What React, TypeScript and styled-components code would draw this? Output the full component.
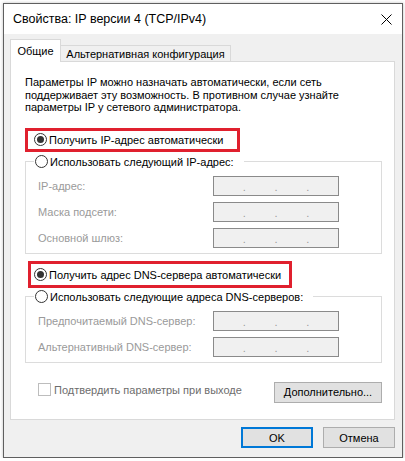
import React from 'react';
import styled, { createGlobalStyle } from 'styled-components';

const GlobalStyle = createGlobalStyle`
  html, body {
    margin: 0;
    padding: 0;
    background: #ffffff;
  }
  body {
    font-family: "Liberation Sans", Arial, sans-serif;
    font-size: 11px;
    color: #000;
  }
  * {
    box-sizing: border-box;
  }
`;

const Window = styled.div`
  margin: 3px 0 0 3px;
  width: 400px;
  height: 455px;
  border: 1px solid #5f5f5f;
  box-shadow: 0 0 3px rgba(0, 0, 0, 0.25);
  display: flex;
  flex-direction: column;
  background: #f0f0f0;
`;

const TitleBar = styled.div`
  height: 30px;
  background: #ffffff;
  display: flex;
  align-items: center;
  justify-content: space-between;
  padding: 0 10px 0 9px;
`;

const Title = styled.span`
  font-size: 12.5px;
  color: #000;
`;

const Body = styled.div`
  flex: 1;
  display: flex;
  flex-direction: column;
  padding: 6px 7px 0 6px;
`;

const Tabs = styled.div`
  display: flex;
  align-items: flex-end;
  height: 22px;
  position: relative;
  z-index: 1;
  margin-bottom: -1px;
`;

const Tab = styled.div<{ $active?: boolean }>`
  height: ${p => (p.$active ? '23px' : '17px')};
  padding: ${p => (p.$active ? '0 0 1px 0' : '0')};
  display: flex;
  align-items: center;
  justify-content: center;
  white-space: nowrap;
  background: ${p => (p.$active ? '#ffffff' : '#f0f0f0')};
  border: 1px solid #d9d9d9;
  border-bottom: ${p => (p.$active ? 'none' : '1px solid #d9d9d9')};
  border-left: ${p => (p.$active ? '1px solid #d9d9d9' : 'none')};
  width: ${p => (p.$active ? '51px' : '170px')};
`;

const Panel = styled.div`
  height: 359px;
  background: #ffffff;
  border: 1px solid #d9d9d9;
  padding: 14px 12px 0 14px;
  display: flex;
  flex-direction: column;
`;

const Intro = styled.p`
  margin: 0;
  line-height: 12.5px;
  white-space: nowrap;
`;

const Highlight = styled.div<{ $left: number; $width: number; $tall?: boolean }>`
  align-self: flex-start;
  margin-left: ${p => p.$left}px;
  width: ${p => p.$width}px;
  border: 3px solid #e0202e;
  padding: ${p => (p.$tall ? '3px' : '1px')} 0 ${p => (p.$tall ? '2px' : '1px')} ${p => 6 - p.$left}px;
`;

const RadioRow = styled.label`
  display: flex;
  align-items: center;
  gap: 2px;
  height: 16px;
  white-space: nowrap;
`;

const RadioMark = styled.span<{ $checked?: boolean }>`
  width: 13px;
  height: 13px;
  border-radius: 50%;
  border: 1px solid #333333;
  background: #ffffff;
  display: flex;
  align-items: center;
  justify-content: center;
  flex-shrink: 0;

  &::after {
    content: '';
    display: ${p => (p.$checked ? 'block' : 'none')};
    width: 7px;
    height: 7px;
    border-radius: 50%;
    background: #333333;
  }
`;

const Group = styled.fieldset`
  margin: 0;
  border: 1px solid #dcdcdc;
  padding: 6px 12px 5px 8px;
  min-width: 0;
`;

const Legend = styled.legend`
  padding: 0 10px 0 1px;
`;

const Fields = styled.div`
  display: grid;
  grid-template-columns: 175px 126px;
  row-gap: 6px;
  padding-left: 4px;
  align-items: center;
`;

const FieldLabel = styled.span`
  color: #9a9a9a;
  white-space: nowrap;
`;

const IpBox = styled.div`
  height: 20px;
  background: #f0f0f0;
  border: 1px solid #8a8a8a;
  display: flex;
  justify-content: space-evenly;
  align-items: center;
  color: #9a9a9a;
  line-height: 12px;
  padding-top: 3px;
`;

const Footer = styled.div`
  margin-top: 19px;
  display: flex;
  justify-content: space-between;
  align-items: center;
`;

const CheckRow = styled.label`
  display: flex;
  align-items: center;
  gap: 3px;
  margin-left: 13px;
  margin-top: -5px;
  color: #6d6d6d;
  white-space: nowrap;
`;

const CheckMark = styled.span`
  width: 13px;
  height: 13px;
  border: 1px solid #bdbdbd;
  background: #ffffff;
`;

const Button = styled.button<{ $primary?: boolean; $w: number }>`
  font: inherit;
  color: #000;
  width: ${p => p.$w}px;
  height: 21px;
  padding: 0;
  background: #e1e1e1;
  border: ${p => (p.$primary ? '2px solid #0078d7' : '1px solid #adadad')};
  border-radius: 0;
`;

const Actions = styled.div`
  display: flex;
  justify-content: flex-end;
  gap: 10px;
  margin-top: 7px;
`;

const Radio = ({ checked, children }: { checked?: boolean; children: React.ReactNode }) => (
  <RadioRow>
    <RadioMark $checked={checked} />
    <span>{children}</span>
  </RadioRow>
);

const IpField = () => (
  <IpBox>
    <span>.</span>
    <span>.</span>
    <span>.</span>
  </IpBox>
);

const CloseIcon = () => (
  <svg width="11" height="11" viewBox="0 0 11 11">
    <path d="M0.5 0.5 L10.5 10.5 M10.5 0.5 L0.5 10.5" stroke="#000" strokeWidth="1" fill="none" />
  </svg>
);

export default function App() {
  return (
    <>
      <GlobalStyle />
      <Window>
        <TitleBar>
          <Title>Свойства: IP версии 4 (TCP/IPv4)</Title>
          <CloseIcon />
        </TitleBar>
        <Body>
          <Tabs>
            <Tab $active>Общие</Tab>
            <Tab>Альтернативная конфигурация</Tab>
          </Tabs>
          <Panel>
            <Intro>
              Параметры IP можно назначать автоматически, если сеть
              <br />
              поддерживает эту возможность. В противном случае узнайте
              <br />
              параметры IP у сетевого администратора.
            </Intro>

            <Highlight $left={0} $width={215} style={{ marginTop: 14 }}>
              <Radio checked>Получить IP-адрес автоматически</Radio>
            </Highlight>

            <Group style={{ marginTop: 2 }}>
              <Legend>
                <Radio>Использовать следующий IP-адрес:</Radio>
              </Legend>
              <Fields>
                <FieldLabel>IP-адрес:</FieldLabel>
                <IpField />
                <FieldLabel>Маска подсети:</FieldLabel>
                <IpField />
                <FieldLabel>Основной шлюз:</FieldLabel>
                <IpField />
              </Fields>
            </Group>

            <Highlight $left={3} $width={264} $tall style={{ marginTop: 7 }}>
              <Radio checked>Получить адрес DNS-сервера автоматически</Radio>
            </Highlight>

            <Group style={{ marginTop: 1 }}>
              <Legend>
                <Radio>Использовать следующие адреса DNS-серверов:</Radio>
              </Legend>
              <Fields>
                <FieldLabel>Предпочитаемый DNS-сервер:</FieldLabel>
                <IpField />
                <FieldLabel>Альтернативный DNS-сервер:</FieldLabel>
                <IpField />
              </Fields>
            </Group>

            <Footer>
              <CheckRow>
                <CheckMark />
                <span>Подтвердить параметры при выходе</span>
              </CheckRow>
              <Button $w={108}>Дополнительно...</Button>
            </Footer>
          </Panel>
          <Actions>
            <Button $primary $w={72}>OK</Button>
            <Button $w={72}>Отмена</Button>
          </Actions>
        </Body>
      </Window>
    </>
  );
}
